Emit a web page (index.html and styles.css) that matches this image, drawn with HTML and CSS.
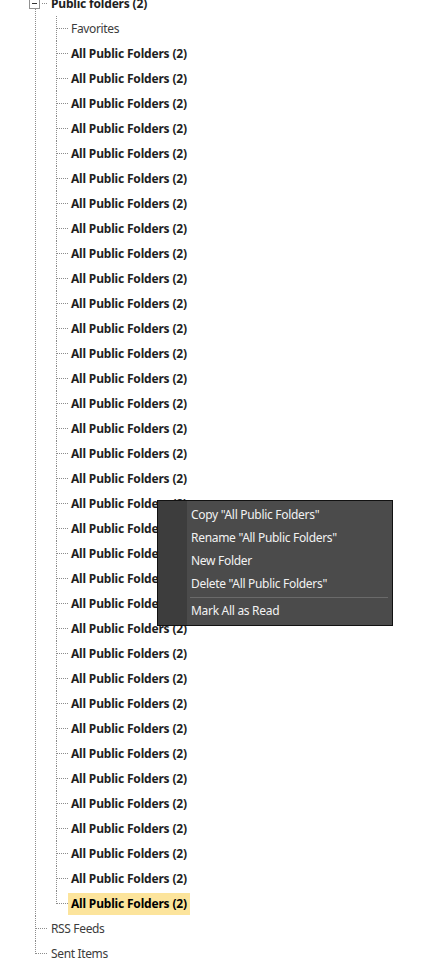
FILE: index.html
```html
<!DOCTYPE html>
<html>
<head>
<meta charset="utf-8">
<link rel="stylesheet" href="styles.css">
</head>
<body>
<div class="tree">
  <ul class="root">
    <li class="node open">
      <div class="row"><span class="expander"></span><span class="label bold">Public folders (2)</span></div>
      <ul class="children">
        <li class="leaf"><div class="row"><span class="label">Favorites</span></div></li>
        <li class="leaf"><div class="row"><span class="label bold">All Public Folders (2)</span></div></li>
        <li class="leaf"><div class="row"><span class="label bold">All Public Folders (2)</span></div></li>
        <li class="leaf"><div class="row"><span class="label bold">All Public Folders (2)</span></div></li>
        <li class="leaf"><div class="row"><span class="label bold">All Public Folders (2)</span></div></li>
        <li class="leaf"><div class="row"><span class="label bold">All Public Folders (2)</span></div></li>
        <li class="leaf"><div class="row"><span class="label bold">All Public Folders (2)</span></div></li>
        <li class="leaf"><div class="row"><span class="label bold">All Public Folders (2)</span></div></li>
        <li class="leaf"><div class="row"><span class="label bold">All Public Folders (2)</span></div></li>
        <li class="leaf"><div class="row"><span class="label bold">All Public Folders (2)</span></div></li>
        <li class="leaf"><div class="row"><span class="label bold">All Public Folders (2)</span></div></li>
        <li class="leaf"><div class="row"><span class="label bold">All Public Folders (2)</span></div></li>
        <li class="leaf"><div class="row"><span class="label bold">All Public Folders (2)</span></div></li>
        <li class="leaf"><div class="row"><span class="label bold">All Public Folders (2)</span></div></li>
        <li class="leaf"><div class="row"><span class="label bold">All Public Folders (2)</span></div></li>
        <li class="leaf"><div class="row"><span class="label bold">All Public Folders (2)</span></div></li>
        <li class="leaf"><div class="row"><span class="label bold">All Public Folders (2)</span></div></li>
        <li class="leaf"><div class="row"><span class="label bold">All Public Folders (2)</span></div></li>
        <li class="leaf"><div class="row"><span class="label bold">All Public Folders (2)</span></div></li>
        <li class="leaf"><div class="row"><span class="label bold">All Public Folders (2)</span></div></li>
        <li class="leaf"><div class="row"><span class="label bold">All Public Folders (2)</span></div></li>
        <li class="leaf"><div class="row"><span class="label bold">All Public Folders (2)</span></div></li>
        <li class="leaf"><div class="row"><span class="label bold">All Public Folders (2)</span></div></li>
        <li class="leaf"><div class="row"><span class="label bold">All Public Folders (2)</span></div></li>
        <li class="leaf"><div class="row"><span class="label bold">All Public Folders (2)</span></div></li>
        <li class="leaf"><div class="row"><span class="label bold">All Public Folders (2)</span></div></li>
        <li class="leaf"><div class="row"><span class="label bold">All Public Folders (2)</span></div></li>
        <li class="leaf"><div class="row"><span class="label bold">All Public Folders (2)</span></div></li>
        <li class="leaf"><div class="row"><span class="label bold">All Public Folders (2)</span></div></li>
        <li class="leaf"><div class="row"><span class="label bold">All Public Folders (2)</span></div></li>
        <li class="leaf"><div class="row"><span class="label bold">All Public Folders (2)</span></div></li>
        <li class="leaf"><div class="row"><span class="label bold">All Public Folders (2)</span></div></li>
        <li class="leaf"><div class="row"><span class="label bold">All Public Folders (2)</span></div></li>
        <li class="leaf"><div class="row"><span class="label bold">All Public Folders (2)</span></div></li>
        <li class="leaf"><div class="row"><span class="label bold">All Public Folders (2)</span></div></li>
        <li class="leaf last"><div class="row"><span class="label bold selected">All Public Folders (2)</span></div></li>
      </ul>
    </li>
    <li class="node"><div class="row"><span class="label">RSS Feeds</span></div></li>
    <li class="node last"><div class="row"><span class="label">Sent Items</span></div></li>
  </ul>

  <div class="menu">
    <div class="menu-item">Copy "All Public Folders"</div>
    <div class="menu-item">Rename "All Public Folders"</div>
    <div class="menu-item">New Folder</div>
    <div class="menu-item">Delete "All Public Folders"</div>
    <div class="menu-sep"></div>
    <div class="menu-item">Mark All as Read</div>
  </div>
</div>
</body>
</html>
```

FILE: styles.css
```css
html, body {
  margin: 0;
  padding: 0;
  background: #ffffff;
}

body {
  width: 441px;
  height: 962px;
  overflow: hidden;
  font-family: "Segoe UI", "Noto Sans", "Open Sans", sans-serif;
  font-size: 12px;
}

.tree {
  position: relative;
  margin-top: -9px;
}

ul {
  list-style: none;
  margin: 0;
  padding: 0;
}

.row {
  height: 25px;
  display: flex;
  align-items: center;
}

/* Root level: vertical line at x=35 */
.root > li {
  padding-left: 51px;
  background-image:
    repeating-linear-gradient(to bottom, #8c8c8c 0 1px, transparent 1px 2px),
    repeating-linear-gradient(to right, #8c8c8c 0 1px, transparent 1px 2px);
  background-repeat: no-repeat;
  background-size: 1px 100%, 12px 1px;
  background-position: 35px 0, 36px 12px;
}

.root > li.open {
  background-size: 1px 100%, 6px 1px;
  background-position: 35px 18px, 42px 12px;
}

.root > li.last {
  background-size: 1px 13px, 12px 1px;
}

.expander {
  margin-left: -22px;
  margin-right: 11px;
  width: 9px;
  height: 9px;
  border: 1px solid #919191;
  background: #ffffff;
  box-sizing: content-box;
  flex: none;
}

.expander::after {
  content: "";
  display: block;
  margin: 4px 2px 0;
  height: 1px;
  background: #333;
}

/* Children level: vertical line at x=56 */
.children {
  margin-left: -51px;
}

.children > li {
  padding-left: 71px;
  background-image:
    repeating-linear-gradient(to bottom, #8c8c8c 0 1px, transparent 1px 2px),
    repeating-linear-gradient(to right, #8c8c8c 0 1px, transparent 1px 2px);
  background-repeat: no-repeat;
  background-size: 1px 100%, 11px 1px;
  background-position: 56px 0, 57px 12px;
}

.children > li.last {
  background-size: 1px 13px, 11px 1px;
}

.label {
  color: #3c3c3c;
  white-space: nowrap;
  line-height: 22px;
  letter-spacing: -0.35px;
}

.label.bold {
  font-weight: bold;
  color: #1e1e1e;
  letter-spacing: -0.18px;
}

.label.selected {
  background: #fce49c;
  margin-left: -3px;
  padding: 0 3px 0 3px;
  color: #000;
}

/* Context menu */
.menu {
  position: absolute;
  left: 157px;
  top: 509px;
  width: 236px;
  height: 126px;
  box-sizing: border-box;
  border: 1px solid #111;
  background: linear-gradient(to right, #3d3d3d 0 29px, #4b4b4b 29px);
  padding-top: 2px;
}

.menu-item {
  height: 23px;
  line-height: 23px;
  padding-left: 33px;
  color: #f2f2f2;
  font-size: 12px;
  letter-spacing: -0.3px;
  white-space: nowrap;
}

.menu-sep {
  height: 1px;
  margin: 2px 4px 1px 32px;
  background: #6a6a6a;
}
```
